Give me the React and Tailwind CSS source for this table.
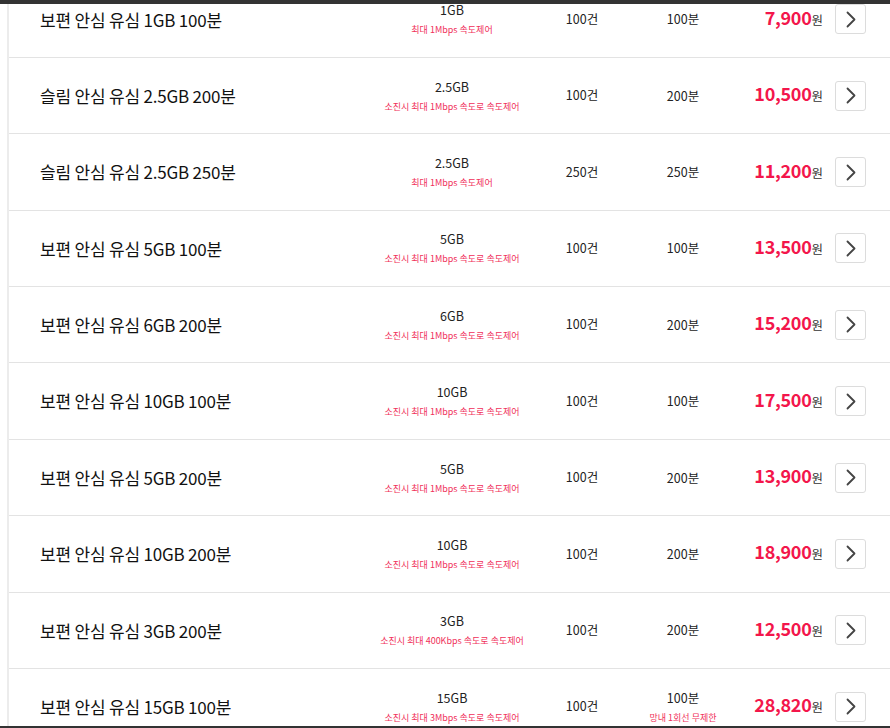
import React from "react";

const rows = [
  { name: "보편 안심 유심 1GB 100분", data: "1GB", note: "최대 1Mbps 속도제어", sms: "100건", voice: "100분", price: "7,900" },
  { name: "슬림 안심 유심 2.5GB 200분", data: "2.5GB", note: "소진시 최대 1Mbps 속도로 속도제어", sms: "100건", voice: "200분", price: "10,500" },
  { name: "슬림 안심 유심 2.5GB 250분", data: "2.5GB", note: "최대 1Mbps 속도제어", sms: "250건", voice: "250분", price: "11,200" },
  { name: "보편 안심 유심 5GB 100분", data: "5GB", note: "소진시 최대 1Mbps 속도로 속도제어", sms: "100건", voice: "100분", price: "13,500" },
  { name: "보편 안심 유심 6GB 200분", data: "6GB", note: "소진시 최대 1Mbps 속도로 속도제어", sms: "100건", voice: "200분", price: "15,200" },
  { name: "보편 안심 유심 10GB 100분", data: "10GB", note: "소진시 최대 1Mbps 속도로 속도제어", sms: "100건", voice: "100분", price: "17,500" },
  { name: "보편 안심 유심 5GB 200분", data: "5GB", note: "소진시 최대 1Mbps 속도로 속도제어", sms: "100건", voice: "200분", price: "13,900" },
  { name: "보편 안심 유심 10GB 200분", data: "10GB", note: "소진시 최대 1Mbps 속도로 속도제어", sms: "100건", voice: "200분", price: "18,900" },
  { name: "보편 안심 유심 3GB 200분", data: "3GB", note: "소진시 최대 400Kbps 속도로 속도제어", sms: "100건", voice: "200분", price: "12,500" },
  { name: "보편 안심 유심 15GB 100분", data: "15GB", note: "소진시 최대 3Mbps 속도로 속도제어", sms: "100건", voice: "100분", voiceNote: "망내 1회선 무제한", price: "28,820" },
];

function Chevron() {
  return (
    <svg width="10" height="17" viewBox="0 0 10 17" fill="none">
      <path d="M1.5 1.5L8.5 8.5L1.5 15.5" stroke="#444" strokeWidth="1.8" strokeLinecap="round" strokeLinejoin="round" />
    </svg>
  );
}

function Row({ r }) {
  return (
    <div className="flex items-center h-[76.375px] border-b border-[#e3e3e3]">
      <div className="w-[363px] pl-[31px] text-[17px] text-[#111] tracking-[-0.2px]">{r.name}</div>
      <div className="w-[160px] flex flex-col items-center">
        <div className="text-[12.5px] text-[#222] leading-[16px]">{r.data}</div>
        <div className="text-[9px] text-[#f0305a] leading-[12px] mt-[6px]">{r.note}</div>
      </div>
      <div className="w-[100px] flex justify-center text-[12.5px] text-[#222]">{r.sms}</div>
      <div className="w-[102px] flex flex-col items-center">
        <div className="text-[12.5px] text-[#222] leading-[16px]">{r.voice}</div>
        {r.voiceNote && (
          <div className="text-[9px] text-[#f0305a] leading-[12px] mt-[6px]">{r.voiceNote}</div>
        )}
      </div>
      <div className="w-[89px] flex justify-end items-baseline mb-[4px]">
        <span className="text-[18px] font-bold text-[#f3164b] tracking-[-0.3px]">{r.price}</span>
        <span className="text-[12.5px] text-[#333]">원</span>
      </div>
      <div className="ml-[12px] w-[31px] h-[30px] border border-[#dcdcdc] rounded-[3px] flex items-center justify-center bg-white">
        <Chevron />
      </div>
    </div>
  );
}

export default function App() {
  return (
    <div
      className="w-[890px] h-[728px] bg-white flex flex-col overflow-hidden"
      style={{ fontFamily: '"Noto Sans CJK KR", "Noto Sans", sans-serif' }}
    >
      <div className="h-[4px] bg-[#333] shrink-0" />
      <div className="flex-1 overflow-hidden">
        <div className="ml-[7px] border-l-2 border-[#ececec] mt-[-22.4px]">
          {rows.map((r, i) => (
            <Row key={i} r={r} />
          ))}
        </div>
      </div>
      <div className="h-[2px] bg-[#333] shrink-0" />
    </div>
  );
}
